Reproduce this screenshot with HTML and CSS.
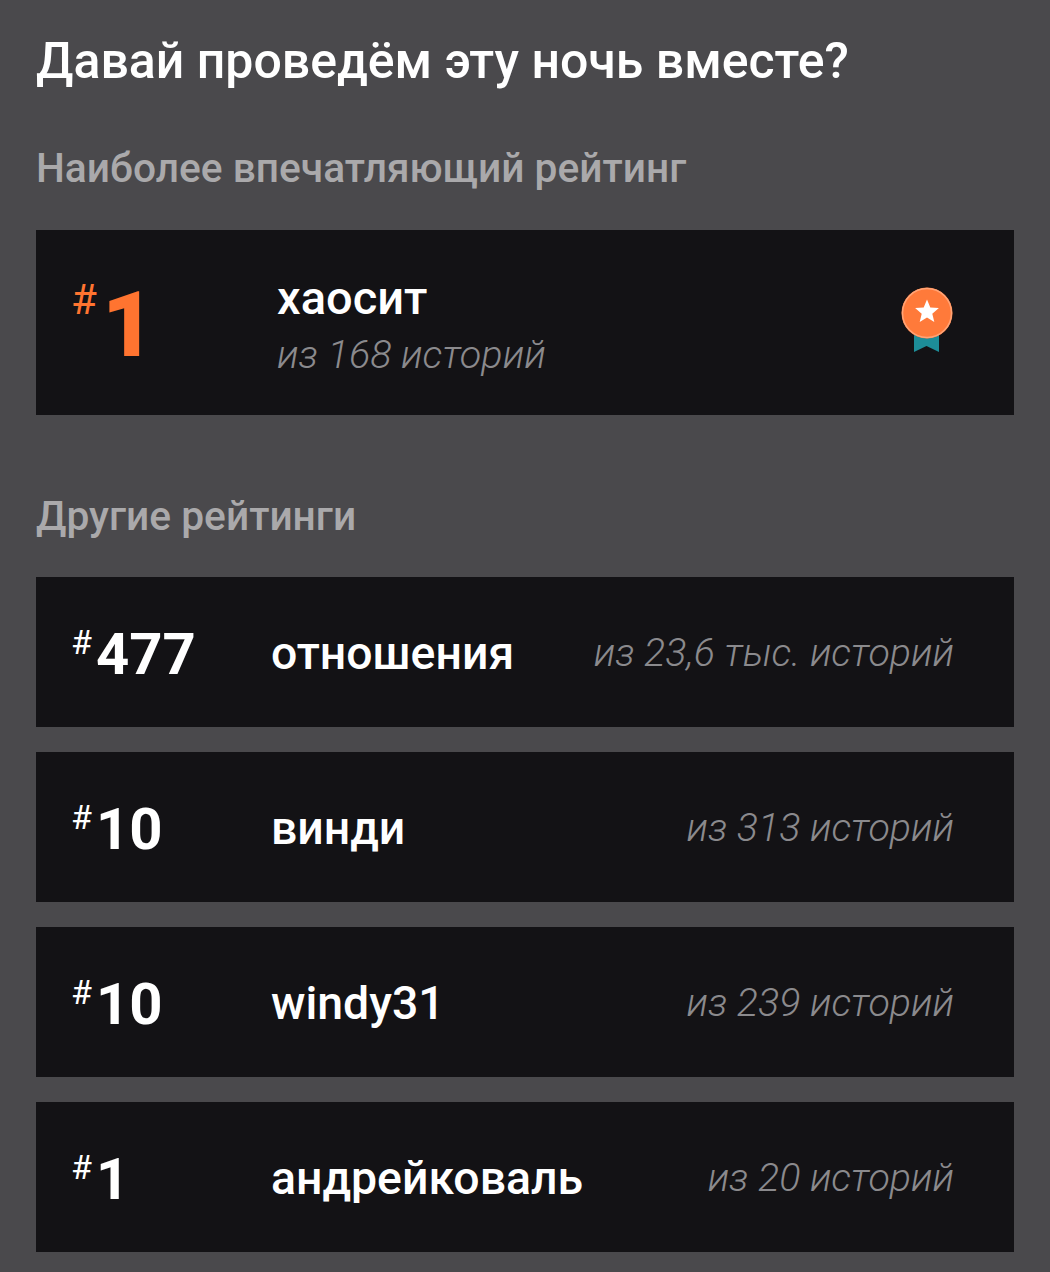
FILE: index.html
```html
<!DOCTYPE html>
<html lang="ru">
<head>
    <meta charset="UTF-8">
    <meta name="viewport" content="width=device-width, initial-scale=1.0">
    <title>Рейтинги</title>
    <link rel="stylesheet" href="styles.css">
</head>
<body>
    <div class="trang">
        <h1 class="tieu-de">Давай проведём эту ночь вместе?</h1>

        <h2 class="muc muc-dau">Наиболее впечатляющий рейтинг</h2>
        <div class="the-noi-bat">
            <div class="hang-lon"><span class="thang">#</span><span class="so">1</span></div>
            <div class="noi-dung">
                <div class="ten-lon">хаосит</div>
                <div class="phu-lon">из 168 историй</div>
            </div>
            <svg class="huy-hieu" width="52" height="66" viewBox="0 0 52 66">
                <path d="M13 40V65L25.500 59L38 65V40Z" fill="#1d8d98"/>
                <circle cx="26" cy="26" r="25.500" fill="#ff7a3a"/>
                <circle cx="26" cy="26" r="24.500" fill="none" stroke="#ffa477" stroke-width="1.500"/>
                <path d="M26 12.500L29.300 20.500L37.900 21.100L31.300 26.700L33.300 35.100L26 30.600L18.700 35.100L20.700 26.700L14.100 21.100L22.700 20.500Z" fill="#fff"/>
            </svg>
        </div>

        <h2 class="muc muc-hai">Другие рейтинги</h2>
        <div class="danh-sach">
            <div class="the">
                <div class="hang"><span class="thang-nho">#</span><span class="so-nho">477</span></div>
                <div class="ten">отношения</div>
                <div class="phu">из 23,6 тыс. историй</div>
            </div>
            <div class="the">
                <div class="hang"><span class="thang-nho">#</span><span class="so-nho">10</span></div>
                <div class="ten">винди</div>
                <div class="phu">из 313 историй</div>
            </div>
            <div class="the">
                <div class="hang"><span class="thang-nho">#</span><span class="so-nho">10</span></div>
                <div class="ten">windy31</div>
                <div class="phu">из 239 историй</div>
            </div>
            <div class="the">
                <div class="hang"><span class="thang-nho">#</span><span class="so-nho">1</span></div>
                <div class="ten">андрейковаль</div>
                <div class="phu">из 20 историй</div>
            </div>
        </div>
    </div>
</body>
</html>
```

FILE: styles.css
```css
*{
    box-sizing: border-box;
    padding: 0;
    margin: 0;
}
body{
    background-color: #4a494c;
    font-family: Roboto, "Liberation Sans", sans-serif;
    height: 1272px;
    overflow: hidden;
}
.trang{
    padding: 35px 36px 0 36px;
}
.tieu-de{
    font-size: 50px;
    line-height: 52px;
    font-weight: 500;
    color: #fff;
}
.muc{
    font-size: 40.700px;
    line-height: 44px;
    font-weight: 500;
    color: #aaa9ab;
}
.muc-dau{
    margin-top: 59px;
}
.muc-hai{
    margin-top: 79px;
}
.the-noi-bat{
    display: flex;
    align-items: center;
    height: 185px;
    margin-top: 40px;
    background-color: #131215;
}
.hang-lon{
    width: 241px;
    padding-left: 35px;
    display: flex;
    align-items: flex-start;
    color: #ff7430;
}
.thang{
    font-size: 42px;
    line-height: 44px;
}
.so{
    font-size: 91px;
    line-height: 85px;
    font-weight: 900;
    margin-left: 5px;
    padding-top: 5px;
}
.noi-dung{
    flex: 1;
    padding-top: 5px;
}
.ten-lon{
    font-size: 47px;
    line-height: 50px;
    font-weight: 500;
    color: #fff;
}
.phu-lon{
    font-size: 39.600px;
    line-height: 46px;
    font-weight: 300;
    font-style: italic;
    color: #8b8a8d;
    margin-top: 9px;
}
.huy-hieu{
    margin-right: 61px;
    margin-bottom: 5px;
}
.danh-sach{
    display: flex;
    flex-direction: column;
    gap: 25px;
    margin-top: 39px;
}
.the{
    display: flex;
    align-items: center;
    height: 150px;
    padding-right: 60px;
    background-color: #131215;
}
.hang{
    width: 235px;
    padding-left: 35px;
    display: flex;
    align-items: flex-start;
    color: #fff;
}
.thang-nho{
    font-size: 34px;
    line-height: 38px;
    padding-top: 3px;
}
.so-nho{
    font-size: 58px;
    line-height: 62px;
    font-weight: 700;
    margin-left: 4px;
    padding-top: 3px;
}
.ten{
    flex: 1;
    font-size: 46.400px;
    line-height: 52px;
    font-weight: 500;
    color: #fff;
    padding-top: 2px;
}
.phu{
    font-size: 39.400px;
    line-height: 46px;
    font-weight: 300;
    font-style: italic;
    color: #8b8a8d;
    padding-top: 1px;
}
```
